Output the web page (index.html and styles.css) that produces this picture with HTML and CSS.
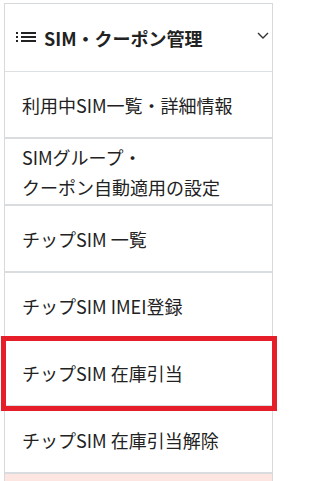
FILE: index.html
```html
<!DOCTYPE html>
<html lang="ja">
<head>
<meta charset="utf-8">
<link rel="stylesheet" href="styles.css">
</head>
<body>
<nav class="menu">
  <div class="menu-header">
    <svg class="list-icon" width="20" height="10" viewBox="0 0 20 10">
      <rect x="0" y="0" width="2" height="2" fill="#222"/>
      <rect x="0" y="4" width="2" height="2" fill="#222"/>
      <rect x="0" y="8" width="2" height="2" fill="#222"/>
      <rect x="5" y="0" width="15" height="2" fill="#222"/>
      <rect x="5" y="4" width="15" height="2" fill="#222"/>
      <rect x="5" y="8" width="15" height="2" fill="#222"/>
    </svg>
    <span class="menu-title">SIM・クーポン管理</span>
    <svg class="chevron" width="12" height="7" viewBox="0 0 12 7">
      <path d="M1 1 L6 6 L11 1" fill="none" stroke="#333" stroke-width="1.4"/>
    </svg>
  </div>
  <ul class="menu-list">
    <li class="menu-item">利用中SIM一覧・詳細情報</li>
    <li class="menu-item">SIMグループ・<br>クーポン自動適用の設定</li>
    <li class="menu-item">チップSIM 一覧</li>
    <li class="menu-item">チップSIM IMEI登録</li>
    <li class="menu-item is-marked">チップSIM 在庫引当</li>
    <li class="menu-item">チップSIM 在庫引当解除</li>
  </ul>
  <div class="menu-next"></div>
</nav>
</body>
</html>
```

FILE: styles.css
```css
html, body {
  margin: 0;
  padding: 0;
  background: #ffffff;
}

body {
  font-family: "Noto Sans CJK JP", "Noto Sans", sans-serif;
  color: #222222;
  overflow: hidden;
}

.menu {
  margin: 3px 0 0 4px;
  width: 269px;
  box-sizing: border-box;
  border: 1px solid #d6dadd;
  border-bottom: none;
  background: #ffffff;
}

.menu-header {
  display: flex;
  align-items: center;
  height: 67px;
  padding: 0 2px 0 11px;
  border-bottom: 1px solid #dde0e3;
}

.list-icon {
  flex: none;
  margin-right: 8px;
  margin-top: -2px;
}

.menu-title {
  flex: 1;
  font-size: 18px;
  font-weight: bold;
  line-height: 1;
  color: #222222;
}

.chevron {
  flex: none;
  margin-right: 1px;
  margin-top: -4px;
}

.menu-list {
  list-style: none;
  margin: 0;
  padding: 0;
}

.menu-item {
  display: flex;
  align-items: center;
  height: 65px;
  padding-left: 17px;
  font-size: 18px;
  line-height: 30px;
  border-bottom: 2px solid #d9dde0;
  color: #222222;
}

.is-marked {
  position: relative;
}

.is-marked::after {
  content: "";
  position: absolute;
  top: -4px;
  left: -4px;
  right: -5px;
  bottom: -6px;
  border: 5px solid #e61e2a;
  box-sizing: border-box;
}

.menu-next {
  height: 10px;
  background: #fde6e2;
}
```
